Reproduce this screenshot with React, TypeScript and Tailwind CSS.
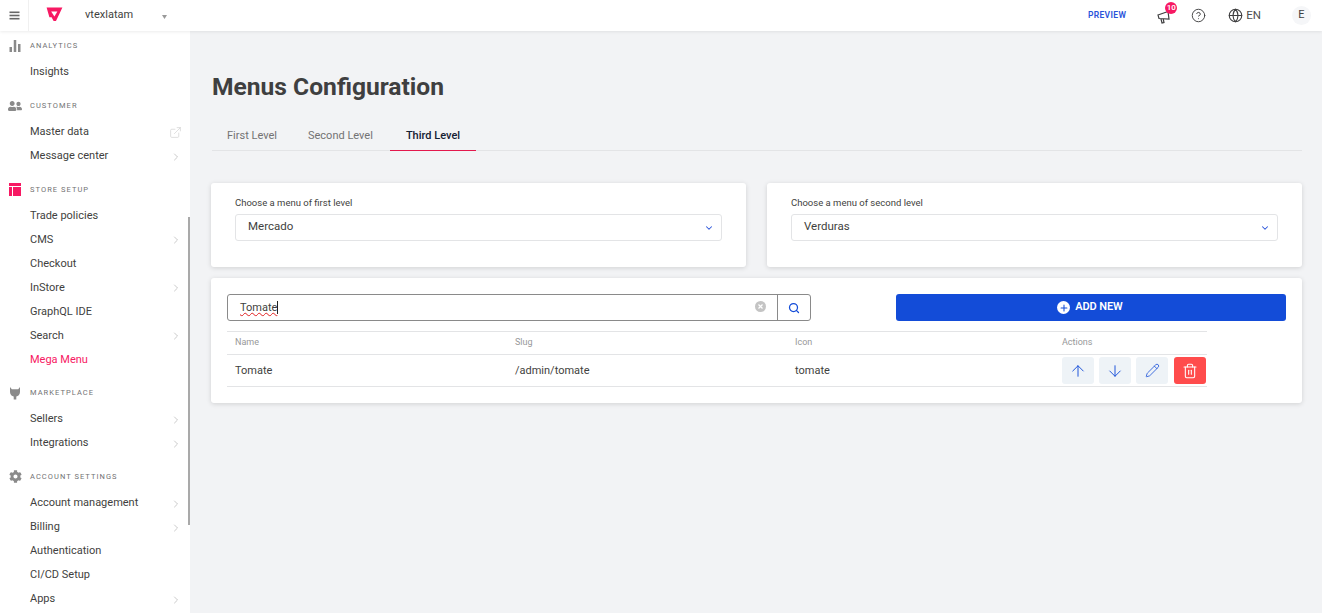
import React from "react";
import { ArrowDown, ArrowUp, ChevronDown, ChevronRight, CircleHelp, ExternalLink, Globe, Pencil, Plus, Search, Trash2 } from "lucide-react";
import { FaCog, FaUserFriends } from "react-icons/fa";

type Item = { label: string; chevron?: boolean; external?: boolean; active?: boolean };
type Section = { title: string; icon: React.ReactNode; items: Item[] };

const BarsIcon = () => (
  <svg width="14" height="14" viewBox="0 0 14 14" fill="#8a8a8a">
    <rect x="1.5" y="8" width="2.5" height="5" />
    <rect x="5.75" y="1" width="2.5" height="12" />
    <rect x="10" y="5" width="2.5" height="8" />
  </svg>
);
const TableIcon = () => (
  <svg width="14" height="14" viewBox="0 0 14 14" fill="#f71963">
    <rect x="1" y="1" width="12" height="3" />
    <rect x="1" y="5" width="3" height="9" />
    <rect x="5" y="5" width="8" height="9" />
  </svg>
);
const PlugIcon = () => (
  <svg width="14" height="14" viewBox="0 0 14 14" fill="#8a8a8a">
    <path d="M2 1 L3.8 3.2 H10.2 L12 1 V6 C12 8.8 10 10.2 8.3 10.6 V13.5 H5.7 V10.6 C4 10.2 2 8.8 2 6 Z" />
  </svg>
);

const sections: Section[] = [
  { title: "ANALYTICS", icon: <BarsIcon />, items: [{ label: "Insights" }] },
  {
    title: "CUSTOMER",
    icon: <FaUserFriends size={14} color="#8a8a8a" />,
    items: [{ label: "Master data", external: true }, { label: "Message center", chevron: true }],
  },
  {
    title: "STORE SETUP",
    icon: <TableIcon />,
    items: [
      { label: "Trade policies" },
      { label: "CMS", chevron: true },
      { label: "Checkout" },
      { label: "InStore", chevron: true },
      { label: "GraphQL IDE" },
      { label: "Search", chevron: true },
      { label: "Mega Menu", active: true },
    ],
  },
  {
    title: "MARKETPLACE",
    icon: <PlugIcon />,
    items: [{ label: "Sellers", chevron: true }, { label: "Integrations", chevron: true }],
  },
  {
    title: "ACCOUNT SETTINGS",
    icon: <FaCog size={13} color="#8a8a8a" />,
    items: [
      { label: "Account management", chevron: true },
      { label: "Billing", chevron: true },
      { label: "Authentication" },
      { label: "CI/CD Setup" },
      { label: "Apps", chevron: true },
    ],
  },
];

function Sidebar() {
  return (
    <aside className="relative w-[190px] h-[582px] shrink-0 bg-white overflow-hidden pt-[5px]">
      {sections.map((s) => (
        <div key={s.title} className="mb-[11.1px]">
          <div className="h-[20px] flex items-center pl-[8px]">
            <span className="w-[14px] flex justify-center">{s.icon}</span>
            <span className="ml-[8px] text-[7.5px] tracking-[1.05px] text-[#727273]">{s.title}</span>
          </div>
          <div className="mt-[4.6px]">
            {s.items.map((i) => (
              <div key={i.label} className="h-[24px] flex items-center pl-[30px] pr-[8px] justify-between">
                <span className={`text-[11px] ${i.active ? "text-[#f71963]" : "text-[#3f3f40]"}`}>{i.label}</span>
                {i.chevron && <ChevronRight size={12} strokeWidth={1.25} color="#aaaaaa" className="mt-[1px]" />}
                {i.external && <ExternalLink size={13} strokeWidth={1.25} color="#cfcfcf" />}
              </div>
            ))}
          </div>
        </div>
      ))}
      <div className="absolute right-0 top-[186px] w-[2px] h-[308px] bg-[#a9a9a9]" />
    </aside>
  );
}

function TopBar() {
  return (
    <header className="relative z-10 h-[31px] bg-white shadow-[0_1px_3px_rgba(0,0,0,0.08)] flex items-center">
      <div className="w-[29px] h-[31px] border-r border-[#f0f0f0] flex items-center justify-center">
        <svg width="11" height="9" viewBox="0 0 11 9" fill="#666">
          <rect width="10" height="1.6" x="0.5" y="0.5" />
          <rect width="10" height="1.6" x="0.5" y="3.7" />
          <rect width="10" height="1.6" x="0.5" y="6.9" />
        </svg>
      </div>
      <svg width="17" height="15" viewBox="0 0 17 15" className="ml-[17px] -mt-[2px]">
        <path d="M0.6 0.5 H16.4 L10 14 H7.6 L5.6 10.2 H3.4 Z" fill="#f71963" />
        <path d="M5.2 4.5 H11.4 L8.4 9.6 Z" fill="#fff" />
      </svg>
      <span className="ml-[22px] text-[11px] text-[#3f3f40]">vtexlatam</span>
      <svg width="5" height="4" viewBox="0 0 5 4" className="ml-[29px] mt-[2px]"><path d="M0 0 H5 L2.5 4 Z" fill="#9a9a9a" /></svg>
      <div className="ml-auto flex items-center">
        <span className="text-[8.5px] font-semibold tracking-[0.35px] text-[#2953da] mr-[31px]">PREVIEW</span>
        <div className="relative w-[14px] h-[14px] mr-[20px]">
          <svg width="14" height="14" viewBox="0 0 14 14" fill="none" stroke="#3f3f40" strokeWidth="1.2" className="mt-[1px]">
            <path d="M1 5 L11 1.5 L12 9 L2 8.5 Z" />
            <path d="M4 9 L5 13 L7 12.5 L6.2 9" />
          </svg>
          <span className="absolute -top-[7px] left-[8px] w-[12px] h-[12px] rounded-full bg-[#f71963] text-white text-[8px] font-semibold flex items-center justify-center">10</span>
        </div>
        <CircleHelp size={15} strokeWidth={1.5} color="#3f3f40" className="mr-[22px]" />
        <Globe size={15} strokeWidth={1.75} color="#3f3f40" />
        <span className="ml-[3px] text-[11.5px] text-[#4f4f50] mr-[31px]">EN</span>
        <span className="w-[19px] h-[19px] rounded-full bg-[#f5f6f8] text-[11px] text-[#3f3f40] flex items-center justify-center mr-[11px]">E</span>
      </div>
    </header>
  );
}

function SelectCard({ label, value }: { label: string; value: string }) {
  return (
    <div className="flex-1 h-[84px] bg-white rounded-[3px] shadow-[0_1px_5px_rgba(0,0,0,0.14)] px-[24px] pt-[14px]">
      <div className="text-[9.5px] leading-[12px] text-[#3f3f40]">{label}</div>
      <div className="mt-[5px] h-[27px] border border-[#e3e4e6] rounded-[3px] flex items-center pl-[12px] pr-[7px] justify-between">
        <span className="text-[11.5px] text-[#3f3f40] -mt-[2px]">{value}</span>
        <ChevronDown size={10} strokeWidth={2.5} color="#2953da" />
      </div>
    </div>
  );
}

function ActionButton({ children, danger, className = "" }: { children: React.ReactNode; danger?: boolean; className?: string }) {
  return (
    <button className={`w-[32px] h-[27px] rounded-[3px] flex items-center justify-center ${danger ? "bg-[#ff4c4c]" : "bg-[#eef3f7]"} ${className}`}>
      {children}
    </button>
  );
}

function Main() {
  return (
    <main className="flex-1 h-[582px] bg-[#f2f3f5] pl-[21px] pr-[20px] overflow-hidden">
      <h1 className="mt-[41px] ml-[1px] text-[24.6px] leading-[30px] font-bold text-[#3f3f40]">Menus Configuration</h1>
      <div className="mt-[17px] flex h-[32px] border-b border-[#e3e4e6] ml-[1px] text-[11px]">
        <div className="w-[81px] pl-[15px] pt-[9px] text-[#727273]">First Level</div>
        <div className="w-[97px] pl-[15px] pt-[9px] text-[#727273]">Second Level</div>
        <div className="w-[86px] h-[32px] pt-[9px] text-center border-b border-[#e3184c] text-[#142032] font-medium">Third Level</div>
      </div>
      <div className="mt-[32px] flex gap-[21px]">
        <SelectCard label="Choose a menu of first level" value="Mercado" />
        <SelectCard label="Choose a menu of second level" value="Verduras" />
      </div>
      <section className="mt-[11px] h-[125px] bg-white rounded-[3px] shadow-[0_1px_5px_rgba(0,0,0,0.14)] px-[16px] pt-[16px]">
        <div className="flex items-start">
          <div className="w-[584px] h-[27px] border border-[#8a8a8a] rounded-[3px] flex items-center pl-[12px]">
            <span className="text-[11px] leading-[13px] -mt-[1px] text-[#3f3f40] underline decoration-wavy decoration-[#e02020] decoration-1 underline-offset-1 border-r border-[#222]">Tomate</span>
            <span className="ml-auto mr-[11px] -mt-[3px] w-[11px] h-[11px] rounded-full bg-[#c4c4c4] flex items-center justify-center">
              <svg width="5" height="5" viewBox="0 0 5 5" stroke="#fff" strokeWidth="1.2"><path d="M0.5 0.5 L4.5 4.5 M4.5 0.5 L0.5 4.5" /></svg>
            </span>
            <span className="w-[33px] h-[25px] border-l border-[#8a8a8a] flex items-center justify-center">
              <Search size={12} strokeWidth={2.5} color="#134cd8" />
            </span>
          </div>
          <button className="ml-[85px] w-[390px] h-[27px] rounded-[3px] bg-[#134cd8] text-white flex items-center justify-center">
            <span className="w-[13px] h-[13px] rounded-full bg-white flex items-center justify-center"><Plus size={10} strokeWidth={2.5} color="#134cd8" /></span>
            <span className="ml-[5px] mr-[2px] text-[11px] font-semibold tracking-[-0.1px]">ADD NEW</span>
          </button>
        </div>
        <div className="mt-[10px] w-[980px] border-t border-[#e3e4e6]">
          <div className="h-[23px] grid grid-cols-[280px_280px_267px_1fr] items-center pl-[8px] text-[9px] text-[#979899] border-b border-[#e3e4e6]">
            <span>Name</span><span>Slug</span><span>Icon</span><span>Actions</span>
          </div>
          <div className="h-[32px] grid grid-cols-[280px_280px_267px_1fr] items-center pl-[8px] text-[11px] text-[#3f3f40] border-b border-[#e3e4e6]">
            <span className="mt-[1px]">Tomate</span><span className="mt-[1px]">/admin/tomate</span><span className="mt-[1px]">tomate</span>
            <div className="flex">
              <ActionButton className="mr-[5px]"><ArrowUp size={18} strokeWidth={1.25} color="#134cd8" /></ActionButton>
              <ActionButton className="mr-[5px]"><ArrowDown size={18} strokeWidth={1.25} color="#134cd8" /></ActionButton>
              <ActionButton className="mr-[6px]"><Pencil size={15} strokeWidth={1.25} color="#134cd8" /></ActionButton>
              <ActionButton danger><Trash2 size={16} strokeWidth={1.6} color="#fff" /></ActionButton>
            </div>
          </div>
        </div>
      </section>
    </main>
  );
}

export default function App() {
  return (
    <div className="w-[1322px] h-[613px] overflow-hidden bg-[#f2f3f5] font-['Roboto',sans-serif]">
      <TopBar />
      <div className="flex">
        <Sidebar />
        <Main />
      </div>
    </div>
  );
}
